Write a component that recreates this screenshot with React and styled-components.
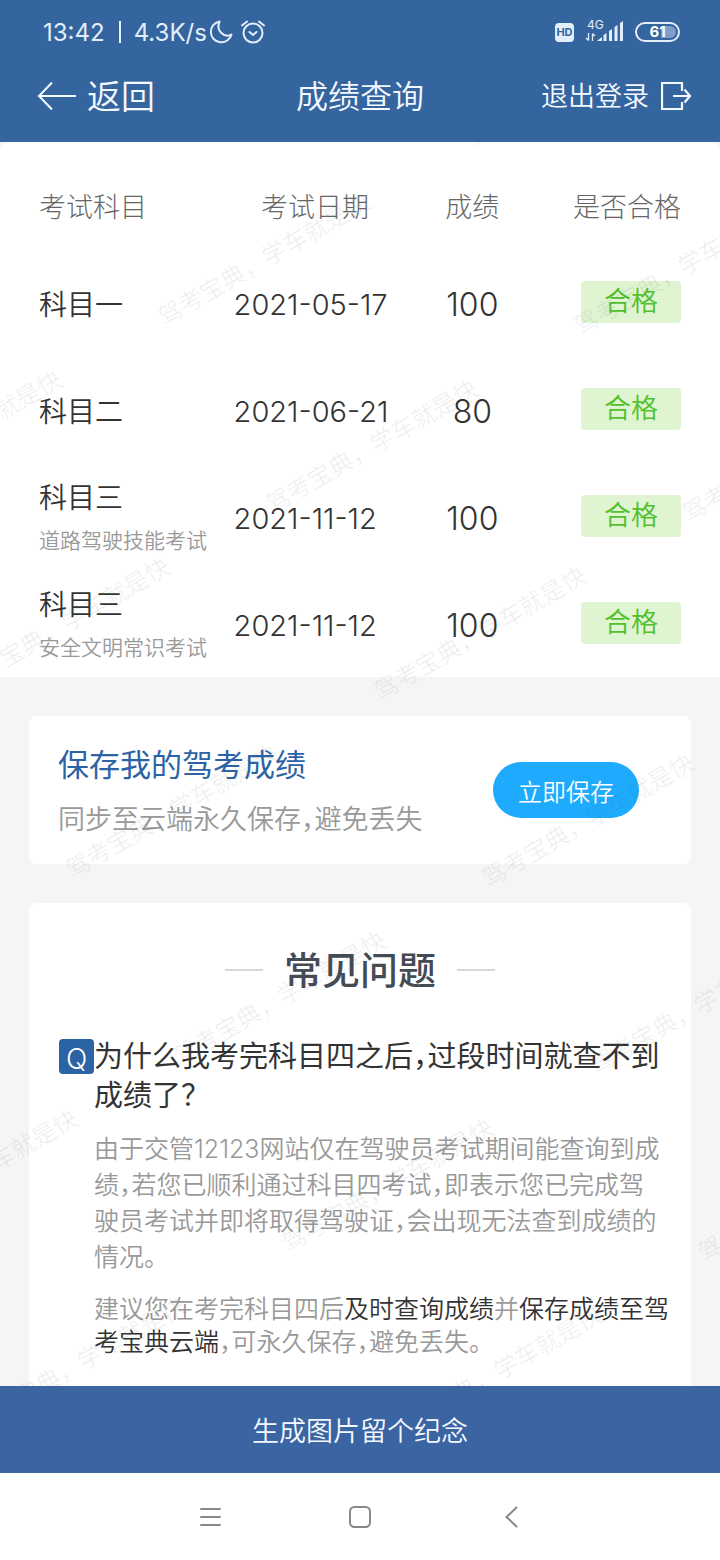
import styled, { createGlobalStyle } from 'styled-components';

const results = [
    { subject: '科目一', date: '2021-05-17', score: 100, status: '合格' },
    { subject: '科目二', date: '2021-06-21', score: 80, status: '合格' },
    { subject: '科目三', detail: '道路驾驶技能考试', date: '2021-11-12', score: 100, status: '合格' },
    { subject: '科目三', detail: '安全文明常识考试', date: '2021-11-12', score: 100, status: '合格' },
];

const watermarks = Array.from({ length: 28 }, (_, index) => `mark-${index}`);

export default function App() {
    return (
        <Page>
            <GlobalStyle />
            <Header>
                <StatusBar />
                <TitleBar>
                    <BackButton type="button">
                        <svg width="40" height="30" viewBox="0 0 40 30" fill="none" stroke="currentColor" strokeWidth="2">
                            <path d="M39 14H2M15 .5L2 14l13 13.500" />
                        </svg>
                        返回
                    </BackButton>
                    <PageTitle>成绩查询</PageTitle>
                    <LogoutButton type="button">
                        退出登录
                        <svg width="31" height="30" viewBox="0 0 31 30" fill="none" stroke="currentColor" strokeWidth="2.2">
                            <path d="M21 9V1H1v26h20v-7M12 14h17M23.500 7.500L29 14l-5.500 6.500" />
                        </svg>
                    </LogoutButton>
                </TitleBar>
            </Header>
            <Content>
                <ResultsPanel>
                    <ResultsTable>
                        <colgroup>
                            <Col $width={30} />
                            <Col $width={26} />
                            <Col $width={23} />
                            <Col $width={21} />
                        </colgroup>
                        <thead>
                            <tr>
                                <HeadCell $align="left">考试科目</HeadCell>
                                <HeadCell $align="center">考试日期</HeadCell>
                                <HeadCell $align="center">成绩</HeadCell>
                                <HeadCell $align="right">是否合格</HeadCell>
                            </tr>
                        </thead>
                        <tbody>
                            {results.map(({ subject, detail, date, score, status }) => (
                                <tr key={subject + (detail || '')}>
                                    <Cell>
                                        <Subject>{subject}</Subject>
                                        {detail && <Detail>{detail}</Detail>}
                                    </Cell>
                                    <DateCell>{date}</DateCell>
                                    <ScoreCell>{score}</ScoreCell>
                                    <StatusCell>
                                        <Badge>{status}</Badge>
                                    </StatusCell>
                                </tr>
                            ))}
                        </tbody>
                    </ResultsTable>
                </ResultsPanel>
                <Cards>
                    <SaveCard>
                        <div>
                            <SaveTitle>保存我的驾考成绩</SaveTitle>
                            <SaveHint>同步至云端永久保存，避免丢失</SaveHint>
                        </div>
                        <SaveButton type="button">立即保存</SaveButton>
                    </SaveCard>
                    <FaqCard>
                        <FaqTitle>常见问题</FaqTitle>
                        <FaqItem>
                            <QuestionMark>Q</QuestionMark>
                            <div>
                                <Question>为什么我考完科目四之后，过段时间就查不到成绩了？</Question>
                                <Answer>
                                    由于交管12123网站仅在驾驶员考试期间能查询到成绩，若您已顺利通过科目四考试，即表示您已完成驾驶员考试并即将取得驾驶证，会出现无法查到成绩的情况。
                                </Answer>
                                <Advice>
                                    建议您在考完科目四后<strong>及时查询成绩</strong>并<strong>保存成绩至驾考宝典云端</strong>，可永久保存，避免丢失。
                                </Advice>
                            </div>
                        </FaqItem>
                    </FaqCard>
                </Cards>
                <Watermark aria-hidden="true">
                    <WatermarkGrid>
                        {watermarks.map((mark) => (
                            <span key={mark}>驾考宝典，学车就是快</span>
                        ))}
                    </WatermarkGrid>
                </Watermark>
            </Content>
            <GenerateButton type="button">生成图片留个纪念</GenerateButton>
            <SystemNav />
        </Page>
    );
}

function StatusBar() {
    return (
        <StatusRow>
            <StatusGroup>
                <span>13:42</span>
                <Divider />
                <Speed>4.3K/s</Speed>
                <svg width="24" height="24" viewBox="0 0 24 24" fill="none" stroke="currentColor" strokeWidth="2" strokeLinejoin="round">
                    <path d="M10.500 1.500A10.500 10.500 0 1 0 22.500 14.500C15.500 18.500 6.500 11 10.500 1.500Z" />
                </svg>
                <AlarmIcon width="26" height="26" viewBox="0 0 26 26" fill="none" stroke="currentColor" strokeWidth="2" strokeLinecap="round">
                    <circle cx="13" cy="14" r="9.500" />
                    <path d="M9.500 13l3.500 3 3.500-3M2 6.500L7 2.500M24 6.500L19 2.500" />
                </AlarmIcon>
            </StatusGroup>
            <StatusGroup>
                <HdIcon>HD</HdIcon>
                <Signal width="38" height="24" viewBox="0 0 38 24" fill="currentColor">
                    <text x="1" y="9" fontSize="12">4G</text>
                    <path d="M2.500 13v7.500M0 18l2.500 2.500M6.500 21v-7M6.500 13.500l2.500 2.500" stroke="currentColor" strokeWidth="1.300" fill="none" />
                    <path d="M11 21l5-4v4zM17.500 15l3-2v8h-3zM23 11l3-2v12h-3zM28.500 7l3-2v16h-3zM34 3l3-2v20h-3z" />
                </Signal>
                <Battery>
                    <BatteryLevel>61</BatteryLevel>
                </Battery>
            </StatusGroup>
        </StatusRow>
    );
}

function SystemNav() {
    return (
        <NavBar>
            <NavButton type="button" aria-label="菜单">
                <svg width="32" height="32" viewBox="0 0 32 32" fill="none" stroke="currentColor" strokeWidth="2" strokeLinecap="round">
                    <path d="M7 8h19M7 16h19M7 24h19" />
                </svg>
            </NavButton>
            <NavButton type="button" aria-label="主页">
                <svg width="32" height="32" viewBox="0 0 32 32" fill="none" stroke="currentColor" strokeWidth="2">
                    <rect x="6" y="6" width="20" height="20" rx="4.500" />
                </svg>
            </NavButton>
            <NavButton type="button" aria-label="返回">
                <svg width="32" height="32" viewBox="0 0 32 32" fill="none" stroke="currentColor" strokeWidth="2" strokeLinecap="round">
                    <path d="M22.500 6.500L12.500 16l10 9.500" />
                </svg>
            </NavButton>
        </NavBar>
    );
}

const GlobalStyle = createGlobalStyle`
    * {
        box-sizing: border-box;
        margin: 0;
        padding: 0;
    }
    body {
        background: #fff;
        font-family: Inter, 'Noto Sans CJK SC', sans-serif;
        font-weight: 350;
    }
    button {
        border: none;
        background: none;
        color: inherit;
        font: inherit;
        cursor: pointer;
    }
    svg {
        display: block;
        flex-shrink: 0;
    }
`;

const Page = styled.div`
    min-height: 100vh;
    display: flex;
    flex-direction: column;
`;

const Header = styled.header`
    padding-bottom: 12px;
    background: #35659f;
    color: #f4f9ff;
`;

const StatusRow = styled.div`
    height: 64px;
    padding: 0 40px 0 43px;
    display: flex;
    align-items: center;
    justify-content: space-between;
    font-size: 24px;
    font-weight: 400;
    color: #e3eefb;
`;

const StatusGroup = styled.div`
    display: flex;
    align-items: center;
`;

const Divider = styled.span`
    width: 2px;
    height: 22px;
    margin: 0 13px 0 14px;
    background: currentColor;
`;

const Speed = styled.span`
    margin-right: 2px;
`;

const AlarmIcon = styled.svg`
    margin-left: 7px;
`;

const HdIcon = styled.span`
    width: 19px;
    height: 19px;
    border-radius: 4px;
    background: #e3eefb;
    color: #35659f;
    font-size: 11px;
    font-weight: 700;
    line-height: 19px;
    text-align: center;
`;

const Signal = styled.svg`
    margin: 0 11px 0 12px;
    overflow: visible;
    font-weight: 400;
`;

const Battery = styled.div`
    width: 45px;
    height: 20px;
    padding: 2px;
    border: 2px solid currentColor;
    border-radius: 10px;
`;

const BatteryLevel = styled.div`
    height: 12px;
    border-radius: 6px;
    background: linear-gradient(90deg, #35659f 60%, #7d9fc9 60%);
    color: #fff;
    font-size: 15px;
    font-weight: 700;
    line-height: 12px;
    text-align: center;
`;

const TitleBar = styled.div`
    height: 66px;
    padding: 0 28px;
    display: grid;
    grid-template-columns: 1fr auto 1fr;
    align-items: center;
`;

const BackButton = styled.button`
    padding-left: 9px;
    display: flex;
    align-items: center;
    gap: 10px;
    font-size: 34px;
    line-height: 42px;
`;

const PageTitle = styled.h1`
    font-size: 32px;
    font-weight: 350;
    line-height: 42px;
`;

const LogoutButton = styled.button`
    justify-self: end;
    display: flex;
    align-items: center;
    gap: 12px;
    font-size: 27px;
    line-height: 42px;
`;

const Content = styled.main`
    position: relative;
    flex: 1;
    display: flex;
    flex-direction: column;
    background: #f5f5f5;
`;

const ResultsPanel = styled.section`
    padding: 20px 39px 0;
    border-radius: 10px 10px 0 0;
    background: #fff;
`;

const ResultsTable = styled.table`
    width: 100%;
    table-layout: fixed;
    border-collapse: collapse;
`;

const Col = styled.col`
    width: ${({ $width }) => $width}%;
`;

const HeadCell = styled.th`
    height: 87px;
    color: #666;
    font-size: 27px;
    font-weight: 300;
    white-space: nowrap;
    text-align: ${({ $align }) => $align};
`;

const Cell = styled.td`
    height: 107px;
    padding-top: 4px;
    color: #333;
    vertical-align: middle;
    white-space: nowrap;
`;

const DateCell = styled(Cell)`
    padding-left: 2px;
    font-size: 29px;
`;

const ScoreCell = styled(Cell)`
    font-size: 32px;
    text-align: center;
`;

const StatusCell = styled(Cell)`
    padding: 0 0 2px;
    text-align: right;
`;

const Subject = styled.div`
    font-size: 28px;
    line-height: 44px;
`;

const Detail = styled.div`
    color: #999;
    font-size: 21px;
    line-height: 42px;
`;

const Badge = styled.span`
    display: inline-block;
    width: 100px;
    border-radius: 4px;
    background: #dff4d1;
    color: #52c02a;
    font-size: 27px;
    line-height: 42px;
    text-align: center;
    vertical-align: middle;
`;

const Cards = styled.div`
    flex: 1;
    padding: 39px 29px 0;
    display: flex;
    flex-direction: column;
    gap: 39px;
`;

const SaveCard = styled.section`
    padding: 19px 52px 19px 29px;
    display: flex;
    align-items: center;
    justify-content: space-between;
    border-radius: 8px;
    background: #fff;
`;

const SaveTitle = styled.h2`
    color: #2c63a5;
    font-size: 31px;
    font-weight: 400;
    line-height: 60px;
`;

const SaveHint = styled.p`
    color: #999;
    font-size: 27px;
    font-feature-settings: 'halt';
    line-height: 50px;
`;

const SaveButton = styled.button`
    width: 146px;
    height: 56px;
    border-radius: 28px;
    background: #1eabfd;
    color: #fff;
    font-size: 24px;
`;

const FaqCard = styled.section`
    flex: 1;
    padding: 40px 20px 27px 30px;
    border-radius: 8px 8px 0 0;
    background: #fff;
`;

const FaqTitle = styled.h2`
    padding-right: 10px;
    display: flex;
    align-items: center;
    justify-content: center;
    gap: 21px;
    color: #454b55;
    font-size: 38px;
    font-weight: 500;
    line-height: 54px;
    &::before,
    &::after {
        content: '';
        width: 38px;
        height: 2px;
        background: #d8d8d8;
    }
`;

const FaqItem = styled.article`
    margin-top: 40px;
    display: flex;
    align-items: flex-start;
`;

const QuestionMark = styled.span`
    flex-shrink: 0;
    width: 35px;
    height: 35px;
    margin-top: 2px;
    border-radius: 4px;
    background: #2c63a5;
    color: #fff;
    font-size: 28px;
    line-height: 40px;
    text-align: center;
`;

const Question = styled.h3`
    color: #333;
    font-size: 29px;
    font-weight: 400;
    font-feature-settings: 'halt';
    line-height: 39px;
`;

const Answer = styled.p`
    margin-top: 16px;
    padding-right: 8px;
    color: #999;
    font-size: 25px;
    font-feature-settings: 'halt';
    line-height: 36px;
`;

const Advice = styled.p`
    margin-top: 18px;
    color: #999;
    font-size: 25px;
    font-feature-settings: 'halt';
    line-height: 33px;
    & strong {
        color: #333;
        font-weight: 350;
    }
`;

const Watermark = styled.div`
    position: absolute;
    inset: 0;
    overflow: hidden;
    pointer-events: none;
`;

const WatermarkGrid = styled.div`
    width: max-content;
    display: grid;
    grid-template-columns: repeat(4, 356px);
    grid-auto-rows: 216px;
    align-items: center;
    color: rgba(60, 80, 80, 0.09);
    font-size: 24px;
    white-space: nowrap;
    transform: rotate(-30deg) translate(-662px, -93px);
    transform-origin: 0 0;
`;

const GenerateButton = styled.button`
    height: 87px;
    background: #3b64a2;
    color: #f4f9ff;
    font-size: 27px;
`;

const NavBar = styled.nav`
    height: 87px;
    display: flex;
    align-items: center;
    justify-content: center;
    gap: 118px;
    background: #fff;
    color: #888;
`;

const NavButton = styled.button`
    width: 32px;
    height: 32px;
`;
